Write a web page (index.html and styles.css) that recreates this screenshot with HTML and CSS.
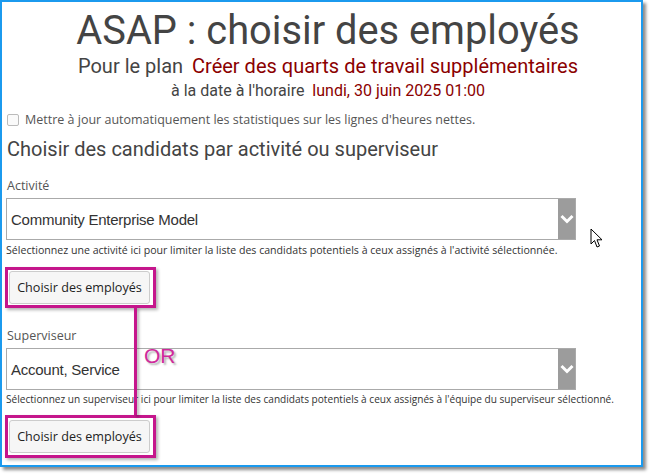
FILE: index.html
```html
<!DOCTYPE html>
<html lang="fr">
<head>
<meta charset="utf-8">
<title>ASAP : choisir des employés</title>
<link rel="stylesheet" href="styles.css">
</head>
<body>
<div class="frame">
  <header class="head">
    <h1 class="title">ASAP : choisir des employés</h1>
    <div class="plan">Pour le plan <span class="hl">Créer des quarts de travail supplémentaires</span></div>
    <div class="date">à la date à l'horaire <span class="hl">lundi, 30 juin 2025 01:00</span></div>
  </header>
  <label class="check"><span class="box"></span>Mettre à jour automatiquement les statistiques sur les lignes d'heures nettes.</label>
  <h2 class="section">Choisir des candidats par activité ou superviseur</h2>

  <div class="field">
    <div class="label">Activité</div>
    <div class="select">
      <span class="value">Community Enterprise Model</span>
      <span class="chev"><svg width="14" height="10" viewBox="0 0 14 10"><path d="M1.5 2 L7 7.5 L12.5 2" fill="none" stroke="#fff" stroke-width="3"/></svg></span>
    </div>
    <div class="help">Sélectionnez une activité ici pour limiter la liste des candidats potentiels à ceux assignés à l'activité sélectionnée.</div>
  </div>
  <div class="mark"><button class="btn">Choisir des employés</button></div>

  <div class="field second">
    <div class="label">Superviseur</div>
    <div class="select">
      <span class="value">Account, Service</span>
      <span class="chev"><svg width="14" height="10" viewBox="0 0 14 10"><path d="M1.5 2 L7 7.5 L12.5 2" fill="none" stroke="#fff" stroke-width="3"/></svg></span>
    </div>
    <div class="help">Sélectionnez un superviseur ici pour limiter la liste des candidats potentiels à ceux assignés à l'équipe du superviseur sélectionné.</div>
  </div>
  <div class="mark last"><button class="btn">Choisir des employés</button></div>

  <div class="connector"></div>
  <div class="or">OR</div>
  <svg class="cursor" width="14" height="21" viewBox="0 0 14 21"><path d="M1 1 L1 16 L4.5 12.5 L7 19 L9.5 18 L7 11.8 L12 11.8 Z" fill="#fff" stroke="#000" stroke-width="1" stroke-linejoin="miter"/></svg>
</div>
</body>
</html>
```

FILE: styles.css
```css
* { box-sizing: border-box; }
html, body { margin: 0; padding: 0; background: #fff; }
body { width: 651px; height: 475px; overflow: hidden; }

.frame {
  position: relative;
  width: 643px;
  height: 467px;
  border: 2px solid #1b9aee;
  box-shadow: 3px 3px 3px rgba(0,0,0,0.45);
  padding: 0 0 0 4px;
  font-family: "Open Sans", "Noto Sans", sans-serif;
  color: #555;
}

.head { text-align: center; color: #444; font-family: Roboto, "Liberation Sans", sans-serif; padding-left: 9px; }
.title { margin: 0; padding-top: 6px; font-weight: 400; font-size: 39.8px; line-height: 46px; }
.plan { font-size: 20px; line-height: 24px; }
.date { font-size: 16px; line-height: 20px; margin-top: 3px; }
.hl { color: #8b0000; margin-left: 4px; }

.check { display: flex; align-items: center; gap: 6px; margin-top: 10px; font-size: 12.5px; line-height: 18px; color: #555; }
.box { width: 12px; height: 12px; border: 1px solid #bbb; border-radius: 2px; background: #fafafa; margin-left: 1px; }

.section { margin: 6px 0 0 1px; font-family: Roboto, "Liberation Sans", sans-serif; font-weight: 400; font-size: 20px; line-height: 28px; color: #444; }

.field { margin-top: 14px; }
.field.second { margin-top: 19px; }
.label { font-size: 12.5px; line-height: 18px; color: #555; padding-left: 1px; }
.select {
  display: flex; align-items: stretch;
  width: 570px; height: 42px; margin-top: 3px;
  border: 1px solid #aaa; background: #fff;
}
.value { flex: 1; display: flex; align-items: center; padding-left: 4px; font-family: "Liberation Sans", Arial, sans-serif; font-size: 15px; letter-spacing: -0.25px; color: #333; }
.chev { width: 17px; background: #9c9c9c; display: flex; align-items: center; justify-content: center; }
.help { font-size: 10.6px; line-height: 14px; margin-top: 3px; color: #333; white-space: nowrap; }
.second .help { margin-top: 2px; font-size: 10.1px; }

.mark {
  width: 151px; margin: 10px 0 0 -1px;
  border: 3px solid #c5168c; padding: 1px 0 1px 1px;
  box-shadow: 2px 2px 3px rgba(0,0,0,0.3);
}
.mark.last { margin-top: 9px; padding: 2px 0 2px 1px; }
.btn {
  display: block; width: 141px; height: 33px;
  font-family: "Open Sans", "Noto Sans", sans-serif; font-size: 12.6px; color: #222;
  background: #f6f6f6; border: 1px solid #ccc; border-radius: 3px;
  padding: 0;
}

.connector {
  position: absolute; left: 132px; top: 305px; width: 3px; height: 108px;
  background: #c5168c; box-shadow: 2px 2px 3px rgba(0,0,0,0.3);
}
.or {
  position: absolute; left: 142px; top: 342px;
  font-family: "Liberation Sans", Arial, sans-serif; font-size: 21px; line-height: 1.15; color: #cf2a9b;
  text-shadow: 2px 2px 2px rgba(0,0,0,0.3);
}
.cursor { position: absolute; left: 588px; top: 226px; }
```
